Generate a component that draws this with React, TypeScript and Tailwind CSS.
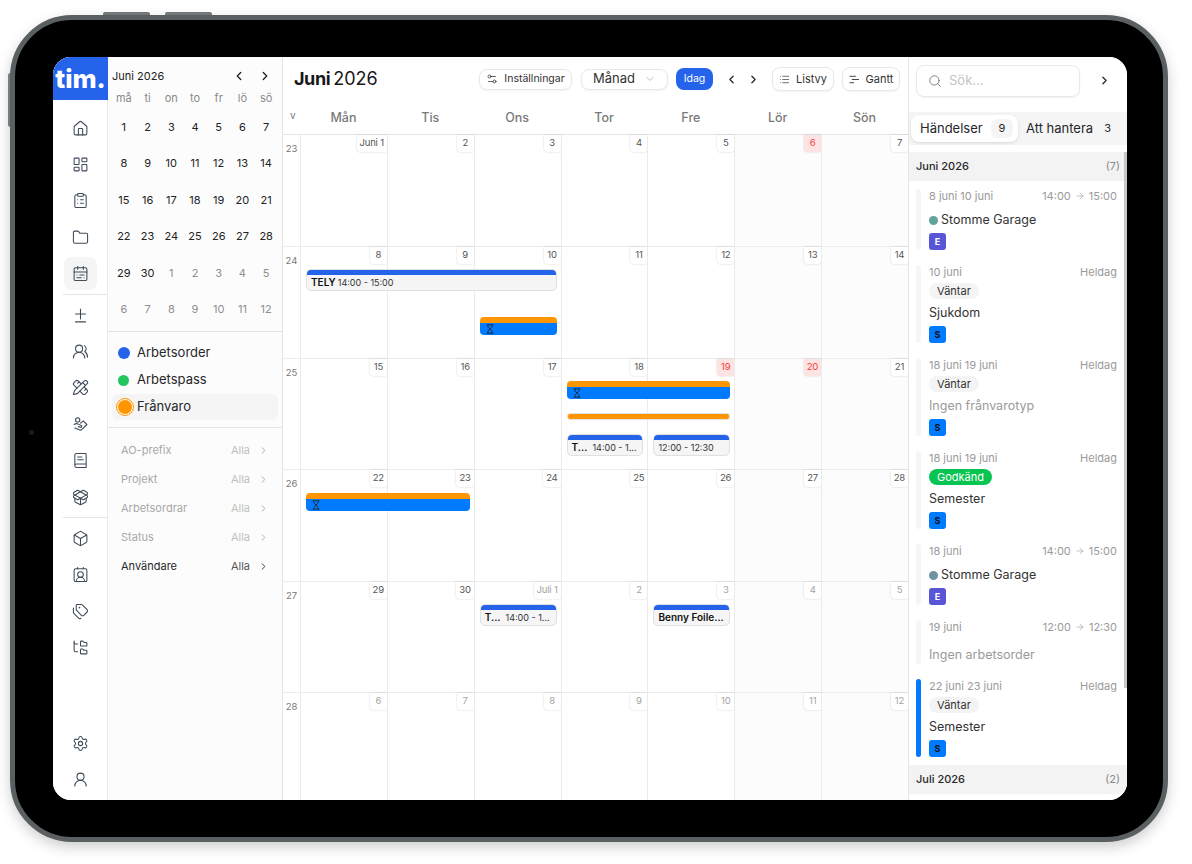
import {
  ArrowRight,
  BookText,
  Box,
  CalendarRange,
  ChevronDown,
  ChevronLeft,
  ChevronRight,
  ClipboardList,
  ContactRound,
  Diff,
  Folder,
  FolderTree,
  Hourglass,
  House,
  LayoutDashboard,
  List,
  PackageOpen,
  PencilRuler,
  Search,
  Settings,
  Settings2,
  Tags,
  UserRound,
  UsersRound,
} from "lucide-react";

const font = { fontFamily: "Inter, 'Liberation Sans', sans-serif" };

// no matching lucide icon for these two
const HandIcon = ({ size = 17, strokeWidth = 1.5, className = "" }: { size?: number; strokeWidth?: number; className?: string }) => (
  <svg width={size} height={size} viewBox="0 0 24 24" fill="none" stroke="currentColor" strokeWidth={strokeWidth} strokeLinecap="round" strokeLinejoin="round" className={className}>
    <circle cx="8" cy="5.5" r="3" />
    <path d="M12 10l4-3 5 5-7 7c-1 1-3 1-4 .5L4 17" />
    <path d="M3 12c2-1.5 4-1.5 6-.5l4 2c1.5.8.5 3-1 2.5l-3-1" />
  </svg>
);

const GanttIcon = () => (
  <svg width="11" height="11" viewBox="0 0 12 12" fill="none" stroke="currentColor" strokeWidth="1" strokeLinecap="round">
    <path d="M1 2.5h6M3.5 6h7M1 9.5h4" />
  </svg>
);

const navTop = [House, LayoutDashboard, ClipboardList, Folder, CalendarRange];
const navMid = [Diff, UsersRound, PencilRuler, HandIcon, BookText, PackageOpen];
const navLow = [Box, ContactRound, Tags, FolderTree];

const NavIcon = ({ Icon, active }: { Icon: typeof HandIcon; active?: boolean }) => (
  <div className="h-[36.4px] flex items-center justify-center">
    <div className={`w-[33px] h-[33px] flex items-center justify-center rounded-lg ${active ? "bg-[#f5f5f5]" : ""}`}>
      <Icon size={17} strokeWidth={1.5} className="text-[#3f4a5a]" />
    </div>
  </div>
);

const Sidebar = () => (
  <aside className="w-[55px] shrink-0 flex flex-col bg-white">
    <div className="h-[43px] bg-[#2563eb] flex items-center justify-center text-white text-[26px] font-extrabold leading-none">
      tim.
    </div>
    <div className="flex-1 flex flex-col pt-[10px] pb-[2px] border-r border-[#ececec]">
      {navTop.map((Icon, i) => (
        <NavIcon key={i} Icon={Icon} active={i === 4} />
      ))}
      <div className="h-px bg-[#e5e5e5] ml-[10px] my-[2px]" />
      {navMid.map((Icon, i) => (
        <NavIcon key={i} Icon={Icon} />
      ))}
      <div className="h-px bg-[#e5e5e5] ml-[10px] my-[2px]" />
      {navLow.map((Icon, i) => (
        <NavIcon key={i} Icon={Icon} />
      ))}
      <div className="mt-auto">
        <NavIcon Icon={Settings} />
        <NavIcon Icon={UserRound} />
      </div>
    </div>
  </aside>
);

const miniDays = [
  [1, 2, 3, 4, 5, 6, 7],
  [8, 9, 10, 11, 12, 13, 14],
  [15, 16, 17, 18, 19, 20, 21],
  [22, 23, 24, 25, 26, 27, 28],
  [29, 30, 1, 2, 3, 4, 5],
  [6, 7, 8, 9, 10, 11, 12],
];

const filters = ["AO-prefix", "Projekt", "Arbetsordrar", "Status", "Användare"];

const MiniPanel = () => (
  <div className="w-[175px] shrink-0 flex flex-col bg-[#fcfcfc] border-r border-[#e5e5e5]">
    <div className="h-[275px] shrink-0 border-b border-[#e0e0e0] px-1 pt-3">
      <div className="h-[14px] flex items-center text-[11px] text-[#222]">
        <span>Juni 2026</span>
        <ChevronLeft size={14} strokeWidth={2.25} className="ml-auto mr-3 text-[#222]" />
        <ChevronRight size={14} strokeWidth={2.25} className="mr-[6px] text-[#222]" />
      </div>
      <div className="grid grid-cols-7 mt-[7px] h-[14px] items-center text-center text-[11px] text-[#8a8a8a]">
        {["må", "ti", "on", "to", "fr", "lö", "sö"].map((d) => (
          <span key={d}>{d}</span>
        ))}
      </div>
      <div className="grid grid-cols-7 mt-[5px]">
        {miniDays.map((week, w) =>
          week.map((d, i) => {
            const muted = w === 5 || (w === 4 && i > 1);
            return (
              <span key={`${w}-${i}`} className={`h-[36.4px] flex items-center justify-center text-[11px] ${muted ? "text-[#8f8f8f]" : "text-[#222]"}`}>
                {d}
              </span>
            );
          })
        )}
      </div>
    </div>
    <div className="h-[96px] shrink-0 border-b border-[#e5e5e5] px-1 pt-[7px] text-[13px] text-[#27272a]">
      <div className="h-[27px] flex items-center">
        <span className="w-[12px] h-[12px] rounded-full bg-[#2563eb] ml-[6px] mr-[7px]" />
        Arbetsorder
      </div>
      <div className="h-[28px] flex items-center">
        <span className="w-[11px] h-[11px] rounded-full bg-[#22c55e] ml-[6px] mr-[8px]" />
        Arbetspass
      </div>
      <div className="h-[26px] flex items-center rounded-md bg-[#f5f5f5]">
        <span className="w-[16px] h-[16px] rounded-full bg-[#ff9500] border-[1.5px] border-white outline-[1.5px] outline-[#ff9500] ml-[5px] mr-[4px]" />
        Frånvaro
      </div>
    </div>
    <div className="pt-2">
      {filters.map((f) => {
        const on = f === "Användare";
        return (
          <div key={f} className={`h-[29px] flex items-center pl-[13px] pr-[13px] text-[11px] ${on ? "text-[#27272a]" : "text-[#a8a8a8]"}`}>
            <span>{f}</span>
            <span className={`ml-auto mr-[8px] ${on ? "text-[#555]" : "text-[#c0c0c0]"}`}>Alla</span>
            <ChevronRight size={11} strokeWidth={2} />
          </div>
        );
      })}
    </div>
  </div>
);

type Day = { n: string; red?: boolean; light?: boolean };
type Ev = { col: number; span: number; top: number; kind: "order" | "abs" | "line"; bold?: string; time?: string };
type Week = { no: number; h: string; days: Day[]; events: Ev[] };

const nums = (list: (number | string)[], light = false, red: number[] = []): Day[] =>
  list.map((n, i) => ({ n: String(n), red: red.includes(i), light: light }));

const weeks: Week[] = [
  { no: 23, h: "h-[112px]", days: nums(["Juni 1", 2, 3, 4, 5, 6, 7], false, [5]), events: [] },
  {
    no: 24,
    h: "h-[112px]",
    days: nums([8, 9, 10, 11, 12, 13, 14]),
    events: [
      { col: 1, span: 3, top: 22, kind: "order", bold: "TELY", time: "14:00 - 15:00" },
      { col: 3, span: 1, top: 70, kind: "abs" },
    ],
  },
  {
    no: 25,
    h: "h-[111px]",
    days: nums([15, 16, 17, 18, 19, 20, 21], false, [4, 5]),
    events: [
      { col: 4, span: 2, top: 22, kind: "abs" },
      { col: 4, span: 2, top: 54, kind: "line" },
      { col: 4, span: 1, top: 75, kind: "order", bold: "T...", time: "14:00 - 1..." },
      { col: 5, span: 1, top: 75, kind: "order", time: "12:00 - 12:30" },
    ],
  },
  { no: 26, h: "h-[112px]", days: nums([22, 23, 24, 25, 26, 27, 28]), events: [{ col: 1, span: 2, top: 23, kind: "abs" }] },
  {
    no: 27,
    h: "h-[111px]",
    days: [
      { n: "29" },
      { n: "30" },
      ...nums(["Juli 1", 2, 3, 4, 5], true),
    ],
    events: [
      { col: 3, span: 1, top: 22, kind: "order", bold: "T...", time: "14:00 - 1..." },
      { col: 5, span: 1, top: 22, kind: "order", bold: "Benny Foile..." },
    ],
  },
  { no: 28, h: "h-[107px]", days: nums([6, 7, 8, 9, 10, 11, 12], true), events: [] },
];

const EventBar = ({ ev }: { ev: Ev }) => {
  const style = { gridColumn: `${ev.col} / span ${ev.span}`, gridRow: "1", marginTop: ev.top };
  const base = "self-start ml-[6px] mr-[4px] overflow-hidden";
  if (ev.kind === "line") return <div style={style} className={`${base} h-[7px] rounded-[3px] bg-[#ff9500] border border-[#e5e5e5]`} />;
  if (ev.kind === "abs")
    return (
      <div style={style} className={`${base} rounded-[4px]`}>
        <div className="h-[6px] bg-[#ff9500]" />
        <div className="h-[12px] bg-[#007aff] flex items-center pl-[5px]">
          <Hourglass size={10} strokeWidth={2} className="text-[#222]" />
        </div>
      </div>
    );
  return (
    <div style={style} className={`${base} rounded-[5px] border border-[#e0e0e0] bg-[#f5f5f5]`}>
      <div className="h-[5px] bg-[#2563eb]" />
      <div className="h-[15px] flex items-center gap-[2px] px-1 text-[9px] text-[#333] whitespace-nowrap">
        {ev.bold && <span className="font-semibold text-[10px] text-[#111]">{ev.bold}</span>}
        {ev.time && <span className={ev.bold === "T..." ? "ml-[3px]" : ""}>{ev.time}</span>}
      </div>
    </div>
  );
};

const DayCell = ({ day, col }: { day: Day; col: number }) => (
  <div
    style={{ gridColumn: col + 1, gridRow: "1" }}
    className={`flex flex-col items-end border-l border-[#ebebeb] ${col > 4 ? "bg-[#fcfcfc]" : "bg-white"}`}
  >
    <span
      className={`h-[17px] min-w-[17px] px-[3px] flex items-center justify-center rounded-bl-[4px] rounded-br-[2px] text-[9.5px] tracking-[-0.2px] whitespace-nowrap shadow-[0_0_2px_rgba(0,0,0,0.2)] ${
        day.red ? "bg-[#fde3e1] text-[#ef4444]" : day.light ? "bg-white text-[#a3a3a3]" : "bg-white text-[#555]"
      }`}
    >
      {day.n}
    </span>
  </div>
);

const Btn = ({ children, className = "" }: { children: React.ReactNode; className?: string }) => (
  <div className={`flex items-center rounded-lg border border-[#e8e8e8] bg-white shadow-[0_1px_2px_rgba(0,0,0,0.05)] text-[#333] ${className}`}>
    {children}
  </div>
);

const Calendar = () => (
  <main className="w-[626px] shrink-0 flex flex-col border-r border-[#e5e5e5] bg-white overflow-hidden">
    <div className="h-[44px] shrink-0 flex items-center pl-[11px] pr-[8px]">
      <h1 className="flex gap-[3px] text-[18px] leading-none text-[#18181b]">
        <span className="font-bold tracking-[-0.4px]">Juni</span>
        <span>2026</span>
      </h1>
      <Btn className="ml-auto w-[93px] h-[21px] justify-center gap-[6px] text-[10.5px]">
        <Settings2 size={12} strokeWidth={1.5} /> Inställningar
      </Btn>
      <Btn className="ml-[9px] w-[87px] h-[21px] pl-[11px] gap-[9px] text-[13px]">
        Månad <ChevronDown size={12} strokeWidth={1.5} className="text-[#aaa]" />
      </Btn>
      <div className="ml-[8px] w-[37px] h-[22px] rounded-lg bg-[#2563eb] text-white text-[10.5px] flex items-center justify-center">Idag</div>
      <ChevronLeft size={13} strokeWidth={2.25} className="ml-[12px] text-[#222]" />
      <ChevronRight size={13} strokeWidth={2.25} className="ml-[9px] text-[#222]" />
      <Btn className="ml-[12px] w-[62px] h-[24px] justify-center gap-[6px] text-[11px]">
        <List size={11} strokeWidth={1.5} /> Listvy
      </Btn>
      <Btn className="ml-[8px] w-[58px] h-[24px] justify-center gap-[6px] text-[11px]">
        <GanttIcon /> Gantt
      </Btn>
    </div>
    <div className="h-[34px] shrink-0 flex border-b border-[#e5e5e5]">
      <div className="w-[17px] shrink-0 pl-[7px] pt-[7px] text-[10px] text-[#777]">v</div>
      <div className="flex-1 grid grid-cols-7 items-center pt-[2px] text-center text-[12.5px] font-medium text-[#7a7a7a]">
        {["Mån", "Tis", "Ons", "Tor", "Fre", "Lör", "Sön"].map((d) => (
          <span key={d}>{d}</span>
        ))}
      </div>
    </div>
    {weeks.map((w) => (
      <div key={w.no} className={`${w.h} shrink-0 flex border-b border-[#ececec] last:border-b-0`}>
        <div className="w-[17px] shrink-0 pt-[7px] text-center text-[9.5px] text-[#777]">{w.no}</div>
        <div className="flex-1 grid grid-cols-7 grid-rows-1">
          {w.days.map((d, i) => (
            <DayCell key={i} day={d} col={i} />
          ))}
          {w.events.map((ev, i) => (
            <EventBar key={i} ev={ev} />
          ))}
        </div>
      </div>
    ))}
  </main>
);

type Item = {
  date: string;
  right: [string, string?];
  pill?: "Väntar" | "Godkänd";
  title: string;
  muted?: boolean;
  dot?: string;
  badge?: "E" | "S";
  bar?: string;
};

const items: Item[] = [
  { date: "8 juni 10 juni", right: ["14:00", "15:00"], title: "Stomme Garage", dot: "bg-[#62a39c]", badge: "E" },
  { date: "10 juni", right: ["Heldag"], pill: "Väntar", title: "Sjukdom", badge: "S" },
  { date: "18 juni 19 juni", right: ["Heldag"], pill: "Väntar", title: "Ingen frånvarotyp", muted: true, badge: "S" },
  { date: "18 juni 19 juni", right: ["Heldag"], pill: "Godkänd", title: "Semester", badge: "S" },
  { date: "18 juni", right: ["14:00", "15:00"], title: "Stomme Garage", dot: "bg-[#6f93a3]", badge: "E" },
  { date: "19 juni", right: ["12:00", "12:30"], title: "Ingen arbetsorder", muted: true },
  { date: "22 juni 23 juni", right: ["Heldag"], pill: "Väntar", title: "Semester", badge: "S", bar: "bg-[#007aff]" },
];

const EventItem = ({ item }: { item: Item }) => (
  <div className="flex gap-2 mb-[15px]">
    <div className={`w-[5px] shrink-0 rounded-[3px] ${item.bar ?? "bg-[#f6f6f6]"}`} />
    <div className={`flex-1 min-w-0 pr-[3px] ${item.badge ? "" : "pb-[2px]"}`}>
      <div className="h-[14px] flex items-center justify-between text-[11px] text-[#9a9a9a]">
        <span>{item.date}</span>
        {item.right[1] ? (
          <span className="flex items-center gap-1">
            {item.right[0]} <ArrowRight size={10} strokeWidth={1.5} /> {item.right[1]}
          </span>
        ) : (
          <span>{item.right[0]}</span>
        )}
      </div>
      {item.pill === "Väntar" && (
        <div className="mt-1 h-[16px] w-fit px-2 rounded-full bg-[#f4f4f5] text-[11px] leading-[16px] text-[#333]">Väntar</div>
      )}
      {item.pill === "Godkänd" && (
        <div className="mt-1 h-[16px] w-fit px-2 rounded-full bg-[#08c451] text-[11px] leading-[16px] text-white">Godkänd</div>
      )}
      <div className={`${item.pill ? "mt-[7px]" : item.badge ? "mt-[10px]" : "mt-[14px]"} h-[14px] flex items-center gap-[3px] text-[12.5px] ${item.muted ? "text-[#9a9a9a]" : "text-[#333]"}`}>
        {item.dot && <span className={`w-[9px] h-[9px] rounded-full ${item.dot}`} />}
        {item.title}
      </div>
      {item.badge && (
        <div
          className={`mt-[6px] w-[17px] h-[17px] rounded-[3px] flex items-center justify-center text-[9px] font-bold ${
            item.badge === "E" ? "bg-[#5856d6] text-white" : "bg-[#007aff] text-[#111]"
          }`}
        >
          {item.badge}
        </div>
      )}
    </div>
  </div>
);

const MonthHead = ({ label, count }: { label: string; count: string }) => (
  <div className="h-[29px] flex items-center justify-between pl-[7px] pr-[7px] bg-[#f3f3f3] text-[11px]">
    <span className="font-medium text-[#27272a]">{label}</span>
    <span className="text-[#8a8a8a]">{count}</span>
  </div>
);

const RightPanel = () => (
  <div className="relative flex-1 flex flex-col bg-white overflow-hidden">
    <div className="h-[55px] shrink-0 flex items-start pl-[7px] pt-[8px]">
      <div className="w-[164px] h-[32px] flex items-center gap-[7px] pl-[11px] rounded-lg border border-[#e8e8e8] shadow-[0_1px_2px_rgba(0,0,0,0.05)] text-[13px] text-[#c4c4c4]">
        <Search size={14} strokeWidth={1.5} className="text-[#777]" />
        Sök...
      </div>
      <ChevronRight size={13} strokeWidth={2.25} className="ml-[18px] mt-[9px] text-[#222]" />
    </div>
    <div className="h-[33px] shrink-0 flex items-center bg-[#f5f5f5] pl-[2px] text-[13px] text-[#27272a]">
      <div className="w-[107px] h-[27px] flex items-center pl-[9px] rounded-lg bg-white shadow-[0_1px_3px_rgba(0,0,0,0.12)]">
        Händelser
        <span className="ml-auto mr-[5px] w-[22px] h-[19px] rounded-md bg-[#f5f5f5] flex items-center justify-center text-[11px]">9</span>
      </div>
      <span className="ml-2">Att hantera</span>
      <span className="ml-[11px] text-[11px]">3</span>
    </div>
    <div className="h-[7px] shrink-0" />
    <MonthHead label="Juni 2026" count="(7)" />
    <div className="pt-2 pl-[7px] pr-[7px] -mb-[7px]">
      {items.map((item, i) => (
        <EventItem key={i} item={item} />
      ))}
    </div>
    <MonthHead label="Juli 2026" count="(2)" />
    <div className="absolute right-0 top-[95px] w-[3px] h-[536px] bg-[#c5c8cc]" />
  </div>
);

const App = () => {
  return (
    <div style={font} className="relative w-[1192px] h-[864px] overflow-hidden bg-white">
      <div className="absolute left-[103px] top-[12px] w-[47px] h-[4px] rounded-t-[2px] bg-[#777b7e]" />
      <div className="absolute left-[165px] top-[12px] w-[47px] h-[4px] rounded-t-[2px] bg-[#777b7e]" />
      <div className="absolute left-[8px] top-[73px] w-[3px] h-[54px] rounded-l-[2px] bg-[#85898c]" />
      <div className="absolute left-[10px] top-[15px] w-[1158px] h-[827px] pl-[38px] pt-[37px] rounded-[62px] bg-black border-[5px] border-[#5a5f62] shadow-[0_5px_14px_rgba(0,0,0,0.2)]">
        <div className="absolute left-[14px] top-[410px] w-[5px] h-[5px] rounded-full bg-[#1c1c1c]" />
        <div className="w-[1074px] h-[743px] flex rounded-[18px] overflow-hidden bg-white">
          <Sidebar />
          <MiniPanel />
          <Calendar />
          <RightPanel />
        </div>
      </div>
    </div>
  );
};

export default App;
